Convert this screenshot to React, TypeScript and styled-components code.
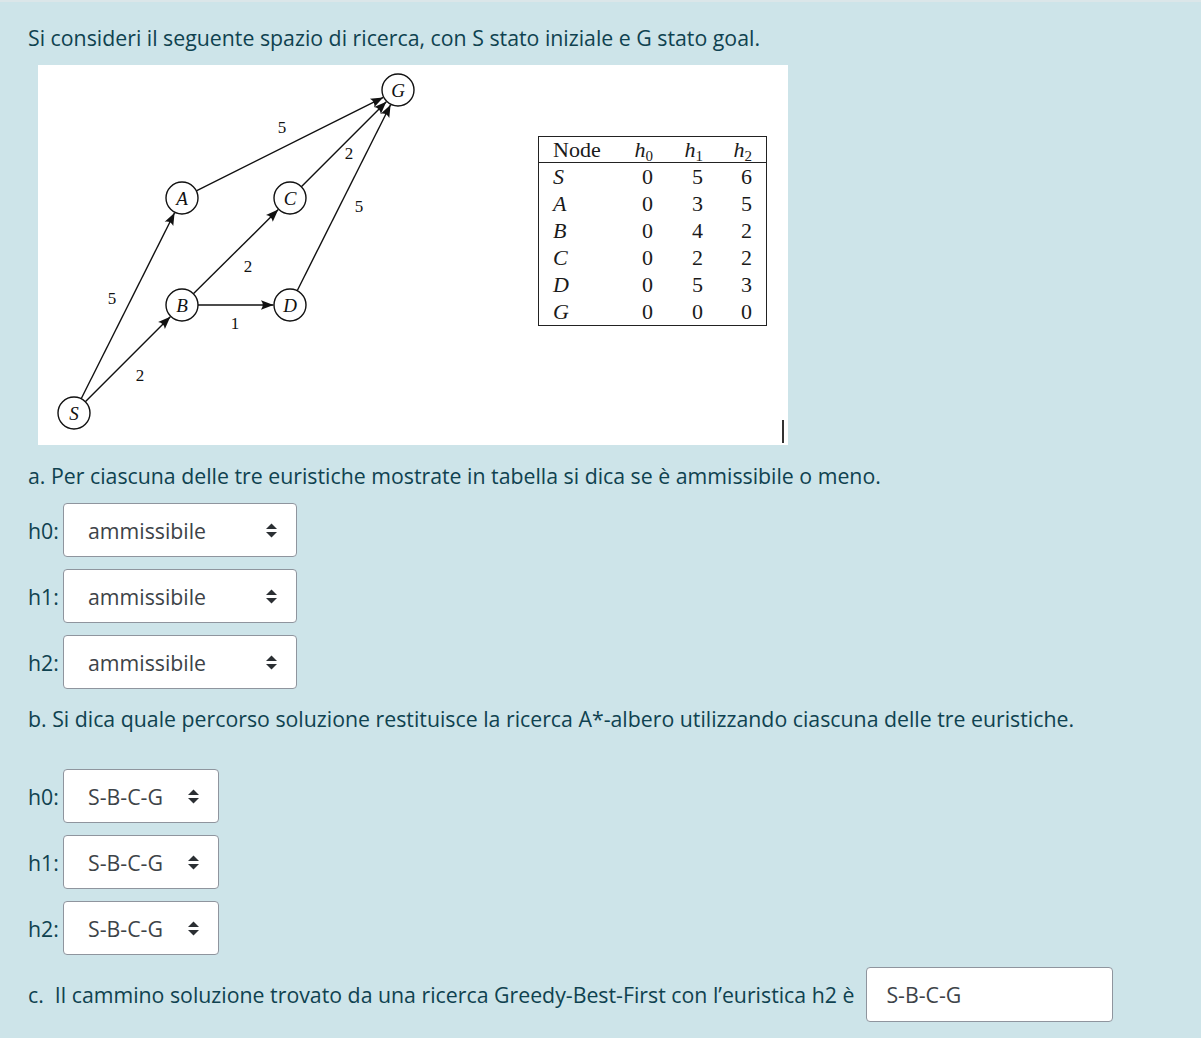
import React from 'react';
import styled, { createGlobalStyle } from 'styled-components';

const GlobalStyle = createGlobalStyle`
  html, body { margin: 0; padding: 0; }
  body {
    background: #cde4e9;
    font-family: "Open Sans", "Noto Sans", sans-serif;
    color: #0f4250;
  }
`;

const Page = styled.div`
  border-top: 2px solid #dbe6e9;
  padding: 21px 0 17px 28px;
  min-height: 1038px;
  box-sizing: border-box;
`;

const Para = styled.p<{ $mt?: number; $mb?: number }>`
  margin: ${(p) => p.$mt ?? 0}px 0 ${(p) => p.$mb ?? 0}px 0;
  font-size: 21.3px;
  line-height: 30px;
  white-space: pre;
`;

const ImageBox = styled.div`
  margin: 12px 0 0 10px;
  width: 750px;
  height: 380px;
  background: #fff;
  display: flex;
  align-items: flex-start;
`;

const GraphSvg = styled.svg`
  flex: none;
  display: block;
`;

const Table = styled.table`
  margin: 71px 0 0 100px;
  border: 1.3px solid #222;
  border-collapse: collapse;
  font-family: "Liberation Serif", "DejaVu Serif", serif;
  font-size: 22px;
  color: #1a1a1a;
  flex: none;
`;

const Th = styled.th<{ $w: number; $left?: boolean }>`
  font-weight: normal;
  height: 25px;
  padding: 0;
  width: ${(p) => p.$w}px;
  text-align: ${(p) => (p.$left ? 'left' : 'right')};
  padding-left: ${(p) => (p.$left ? 14 : 0)}px;
  border-bottom: 1.2px solid #222;
  line-height: 25px;
  &:last-child { padding-right: 14px; }
`;

const Td = styled.td<{ $left?: boolean }>`
  padding: 0;
  height: 27px;
  line-height: 27px;
  text-align: ${(p) => (p.$left ? 'left' : 'right')};
  padding-left: ${(p) => (p.$left ? 14 : 0)}px;
  font-style: ${(p) => (p.$left ? 'italic' : 'normal')};
  &:last-child { padding-right: 14px; }
`;

const HVar = styled.span`
  font-style: italic;
  sub { font-style: normal; font-size: 15px; vertical-align: -4px; line-height: 0; }
`;

const Caret = styled.div`
  align-self: flex-end;
  margin: 0 4px 2px auto;
  width: 2px;
  height: 23px;
  background: #333;
  flex: none;
`;

const Rows = styled.div<{ $mt: number }>`
  display: flex;
  flex-direction: column;
  gap: 12px;
  margin-top: ${(p) => p.$mt}px;
`;

const Row = styled.div`
  display: flex;
  align-items: center;
`;

const Label = styled.span`
  font-size: 21.3px;
  width: 35px;
`;

const SelectBox = styled.div<{ $w: number }>`
  box-sizing: border-box;
  width: ${(p) => p.$w}px;
  height: 54px;
  background: #fff;
  border: 1px solid #8f959e;
  border-radius: 4px;
  display: flex;
  align-items: center;
  justify-content: space-between;
  padding: 0 18px 0 24px;
  font-size: 21.3px;
  color: #3d4348;
`;

const InputBox = styled.div`
  box-sizing: border-box;
  width: 247px;
  height: 55px;
  background: #fff;
  border: 1px solid #8f959e;
  border-radius: 4px;
  display: flex;
  align-items: center;
  padding: 0 19px;
  font-size: 21.3px;
  color: #3d4348;
`;

const LastRow = styled.div`
  display: flex;
  align-items: center;
  gap: 12px;
  margin-top: 12px;
`;

const SortIcon = () => (
  <svg width="13" height="15" viewBox="0 0 13 15">
    <path d="M6.5 0.5 L12 6 H1 Z" fill="#2b2f33" />
    <path d="M6.5 14.5 L12 9 H1 Z" fill="#2b2f33" />
  </svg>
);

const Select = ({ w, value }: { w: number; value: string }) => (
  <SelectBox $w={w}>
    <span>{value}</span>
    <SortIcon />
  </SelectBox>
);

type P = { x: number; y: number };
const nodes: Record<string, P> = {
  S: { x: 36, y: 348 },
  A: { x: 144, y: 133 },
  B: { x: 144, y: 240 },
  C: { x: 252, y: 133 },
  D: { x: 252, y: 240 },
  G: { x: 360, y: 25 },
};
const R = 16;
const edges: [string, string][] = [
  ['S', 'A'],
  ['S', 'B'],
  ['A', 'G'],
  ['B', 'C'],
  ['B', 'D'],
  ['C', 'G'],
  ['D', 'G'],
];
const edgeLabels = [
  { x: 244, y: 62, t: '5' },
  { x: 311, y: 88, t: '2' },
  { x: 321, y: 141, t: '5' },
  { x: 210, y: 201, t: '2' },
  { x: 74, y: 233, t: '5' },
  { x: 197, y: 258, t: '1' },
  { x: 102, y: 310, t: '2' },
];

const Graph = () => (
  <GraphSvg width="400" height="380" viewBox="0 0 400 380">
    <defs>
      <marker
        id="arr"
        markerUnits="userSpaceOnUse"
        markerWidth="14"
        markerHeight="12"
        refX="13"
        refY="6"
        orient="auto"
      >
        <path d="M0.5 1.2 L13 6 L0.5 10.8 Q4 6 0.5 1.2 Z" fill="#111" />
      </marker>
    </defs>
    {edges.map(([a, b]) => {
      const p = nodes[a];
      const q = nodes[b];
      const dx = q.x - p.x;
      const dy = q.y - p.y;
      const L = Math.hypot(dx, dy);
      const ux = dx / L;
      const uy = dy / L;
      return (
        <line
          key={a + b}
          x1={p.x + ux * R}
          y1={p.y + uy * R}
          x2={q.x - ux * (R + 0.5)}
          y2={q.y - uy * (R + 0.5)}
          stroke="#111"
          strokeWidth="1.4"
          markerEnd="url(#arr)"
        />
      );
    })}
    {Object.entries(nodes).map(([k, p]) => (
      <g key={k}>
        <circle cx={p.x} cy={p.y} r={R} fill="#fff" stroke="#111" strokeWidth="1.4" />
        <text
          x={p.x}
          y={p.y + 6.5}
          textAnchor="middle"
          fontFamily='"Liberation Serif", "DejaVu Serif", serif'
          fontStyle="italic"
          fontSize="19"
          fill="#111"
        >
          {k}
        </text>
      </g>
    ))}
    {edgeLabels.map((l, i) => (
      <text
        key={i}
        x={l.x}
        y={l.y + 6}
        textAnchor="middle"
        fontFamily='"Liberation Serif", "DejaVu Serif", serif'
        fontSize="17"
        fill="#111"
      >
        {l.t}
      </text>
    ))}
  </GraphSvg>
);

const tableRows = [
  ['S', '0', '5', '6'],
  ['A', '0', '3', '5'],
  ['B', '0', '4', '2'],
  ['C', '0', '2', '2'],
  ['D', '0', '5', '3'],
  ['G', '0', '0', '0'],
];

export default function App() {
  return (
    <>
      <GlobalStyle />
      <Page>
        <Para>Si consideri il seguente spazio di ricerca, con S stato iniziale e G stato goal.</Para>
        <ImageBox>
          <Graph />
          <Table>
            <thead>
              <tr>
                <Th $w={52} $left>Node</Th>
                <Th $w={48}>
                  <HVar>h<sub>0</sub></HVar>
                </Th>
                <Th $w={50}>
                  <HVar>h<sub>1</sub></HVar>
                </Th>
                <Th $w={49}>
                  <HVar>h<sub>2</sub></HVar>
                </Th>
              </tr>
            </thead>
            <tbody>
              {tableRows.map((r) => (
                <tr key={r[0]}>
                  <Td $left>{r[0]}</Td>
                  <Td>{r[1]}</Td>
                  <Td>{r[2]}</Td>
                  <Td>{r[3]}</Td>
                </tr>
              ))}
            </tbody>
          </Table>
          <Caret />
        </ImageBox>
        <Para $mt={16}>a. Per ciascuna delle tre euristiche mostrate in tabella si dica se è ammissibile o meno.</Para>
        <Rows $mt={12}>
          {['h0:', 'h1:', 'h2:'].map((h) => (
            <Row key={h}>
              <Label>{h}</Label>
              <Select w={234} value="ammissibile" />
            </Row>
          ))}
        </Rows>
        <Para $mt={15}>b. Si dica quale percorso soluzione restituisce la ricerca A*-albero utilizzando ciascuna delle tre euristiche.</Para>
        <Rows $mt={35}>
          {['h0:', 'h1:', 'h2:'].map((h) => (
            <Row key={h}>
              <Label>{h}</Label>
              <Select w={156} value="S-B-C-G" />
            </Row>
          ))}
        </Rows>
        <LastRow>
          <Para>{'c.  Il cammino soluzione trovato da una ricerca Greedy-Best-First con l’euristica h2 è'}</Para>
          <InputBox>S-B-C-G</InputBox>
        </LastRow>
      </Page>
    </>
  );
}
